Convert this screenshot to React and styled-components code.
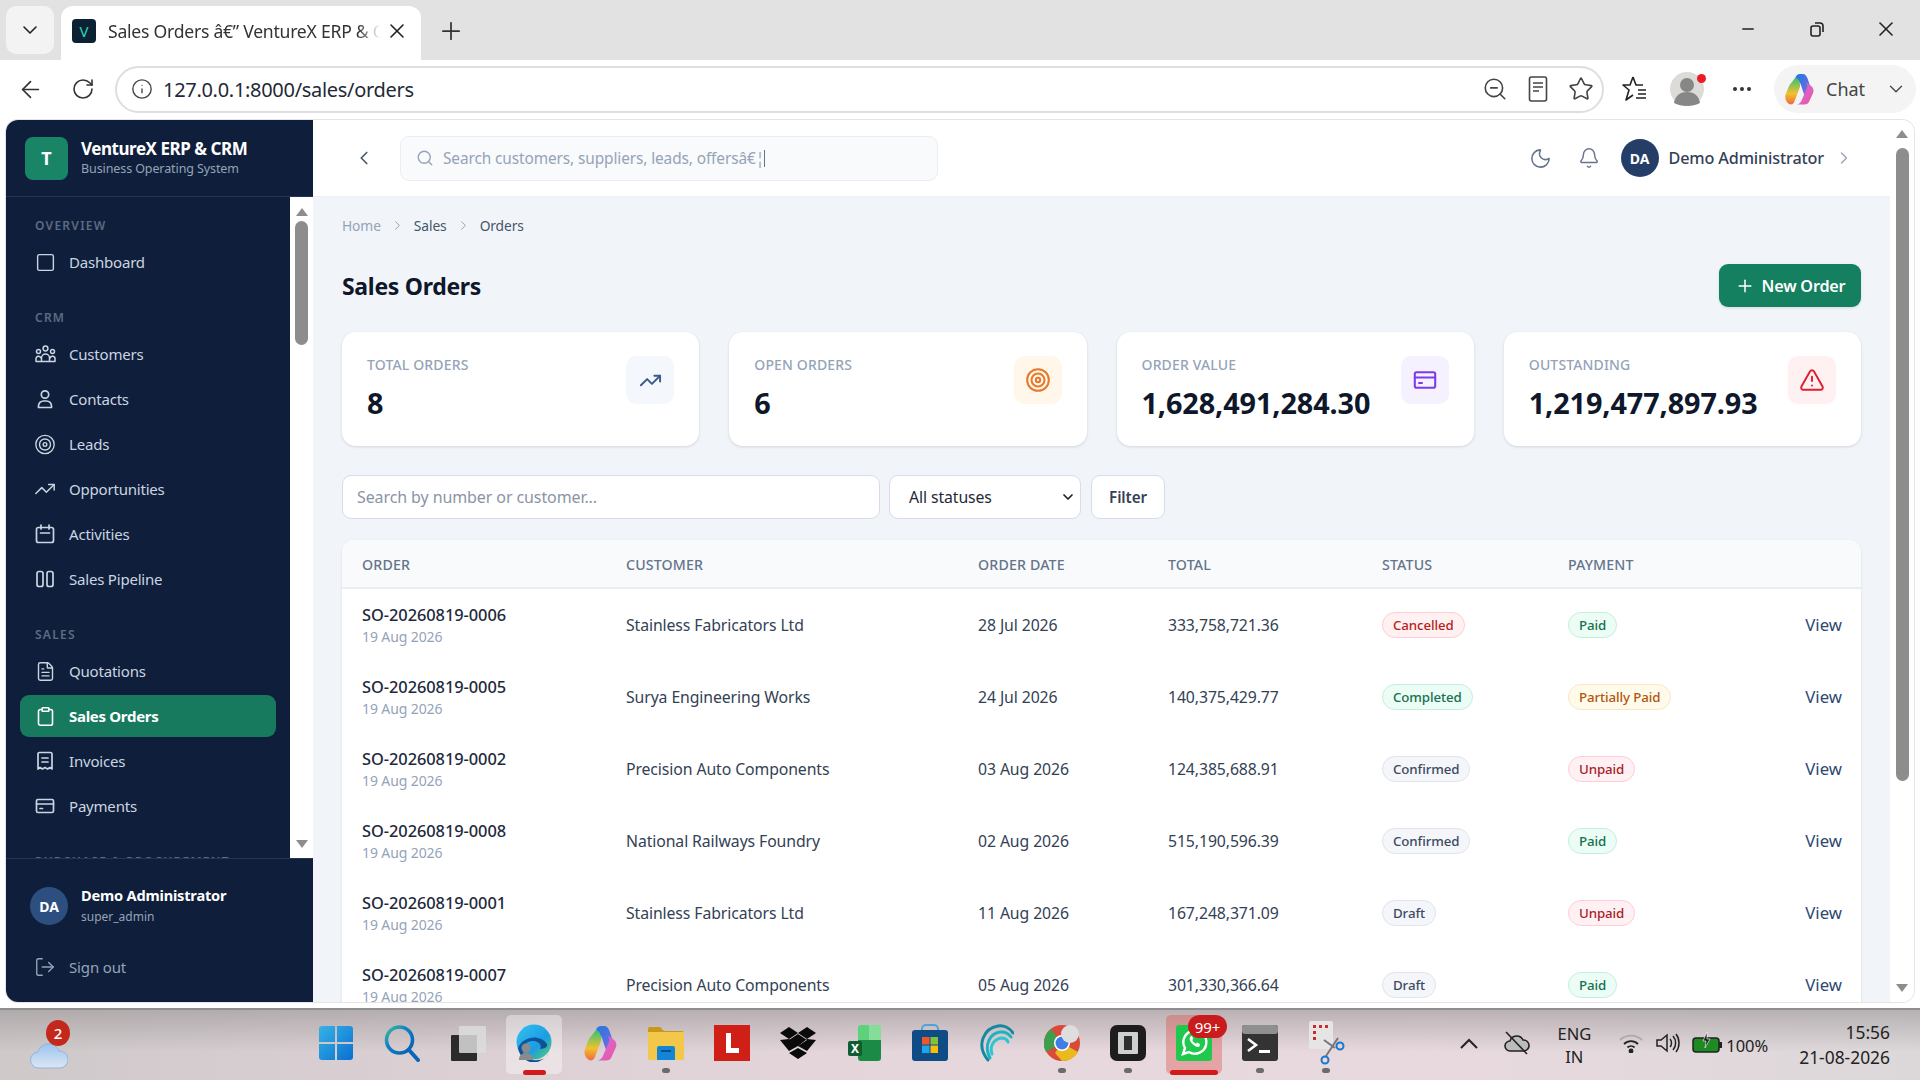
import React from 'react';
import styled, { createGlobalStyle } from 'styled-components';
import { ChevronDown, ChevronLeft, ChevronRight, Plus, X, ArrowLeft, RotateCw, Info, ZoomOut, Star, Minus, Search, Moon, Bell, Square, Target, TrendingUp, FileText, Clipboard, LogOut, TriangleAlert, MoreHorizontal } from 'lucide-react';

const Global = createGlobalStyle`
  * { box-sizing: border-box; }
  html, body { margin: 0; padding: 0; height: 100%; background: #fff; overflow: hidden; }
  body { font-family: "Noto Sans", "Open Sans", Arial, sans-serif; color: #0f172a; }
`;

const Page = styled.div`display:flex;flex-direction:column;height:1080px;width:1920px;overflow:hidden;background:#fff;`;

/* browser chrome */
const TabStrip = styled.div`height:60px;background:#e2e2e2;display:flex;align-items:flex-start;padding:6px 0 0 6px;flex:none;`;
const TabMenu = styled.div`width:48px;height:48px;background:#f3f3f3;border-radius:10px;display:flex;align-items:center;justify-content:center;color:#222;margin-right:7px;`;
const Tab = styled.div`width:360px;height:54px;background:#fff;border-radius:12px 12px 0 0;display:flex;align-items:center;padding:0 0 4px 11px;position:relative;`;
const Favicon = styled.div`width:24px;height:24px;border-radius:4px;background:#0c2132;color:#2dd4bf;font-size:15px;display:flex;align-items:center;justify-content:center;`;
const TabTitle = styled.div`margin-left:12px;width:272px;font-family:"Noto Sans",sans-serif;font-size:17.6px;letter-spacing:-0.25px;color:#333;white-space:nowrap;overflow:hidden;
  -webkit-mask-image:linear-gradient(90deg,#000 92%,transparent);mask-image:linear-gradient(90deg,#000 92%,transparent);`;
const TabClose = styled.div`margin-left:5px;display:flex;color:#222;`;
const NewTab = styled.div`margin:11px 0 0 16px;display:flex;color:#333;`;
const WinControls = styled.div`margin-left:auto;display:flex;align-items:center;height:46px;padding-right:0;color:#222;gap:0;`;
const WinBtn = styled.div`width:69px;display:flex;justify-content:center;`;

const Toolbar = styled.div`height:60px;display:flex;align-items:center;flex:none;padding:0 4px 2px 0;background:#fff;`;
const NavBtn = styled.div`width:46px;margin-left:${p=>p.$ml||0}px;display:flex;justify-content:center;color:#333;`;
const AddressBar = styled.div`margin-left:${p=>p.$ml||0}px;width:1489px;height:47px;border:2px solid #dedede;border-radius:24px;display:flex;align-items:center;padding:0 8px 0 14px;`;
const Url = styled.div`margin-left:10px;font-size:20px;letter-spacing:-0.3px;color:#1f2937;`;
const BarIcons = styled.div`margin-left:auto;display:flex;align-items:center;gap:20px;color:#444;`;
const ToolRight = styled.div`display:flex;align-items:center;color:#333;margin-left:18px;gap:0;`;
const ProfileWrap = styled.div`position:relative;width:34px;height:34px;margin-left:22px;`;
const ProfileDot = styled.div`position:absolute;right:-2px;top:2px;width:9px;height:9px;border-radius:50%;background:#ec1c24;`;
const ChatPill = styled.div`margin-left:9px;width:142px;height:48px;border-radius:24px;background:#f4f4f4;display:flex;align-items:center;padding-left:9px;font-size:18px;color:#444;`;
const ChatLabel = styled.span`margin-left:11px;`;
const ChatChevron = styled.span`margin-left:20px;display:flex;`;

/* window */
const AppWindow = styled.div`margin:0 6px 0 6px;height:882px;flex:none;display:flex;overflow:hidden;border-radius:12px;box-shadow:0 0 0 1px #e4e4e4;background:#fff;`;
const Sidebar = styled.aside`width:307px;flex:none;background:#0f1f3b;display:flex;flex-direction:column;`;
const Brand = styled.div`height:77px;flex:none;display:flex;align-items:center;padding:0 0 0 19px;border-bottom:1px solid #253450;`;
const BrandLogo = styled.div`width:43px;height:43px;border-radius:8px;background:#1a8466;color:#fff;font-size:18px;font-weight:700;display:flex;align-items:center;justify-content:center;`;
const BrandText = styled.div`margin-left:13px;display:flex;flex-direction:column;`;
const BrandName = styled.div`font-size:17px;font-weight:700;letter-spacing:-.45px;color:#fff;line-height:22px;`;
const BrandSub = styled.div`font-size:12.5px;color:#94a3b8;line-height:18px;letter-spacing:-.1px;`;
const NavArea = styled.div`height:661px;flex:none;display:flex;overflow:hidden;`;
const Nav = styled.nav`width:284px;flex:none;padding:20px 14px 0 14px;overflow:hidden;`;
const SectionLabel = styled.div`font-size:12px;font-weight:600;letter-spacing:1.25px;color:#5d6b82;padding-left:15px;height:18px;line-height:18px;margin:${p=>p.$first?'0':'26px'} 0 6px;white-space:nowrap;`;
const NavItem = styled.div`height:42px;margin-bottom:3px;border-radius:9px;display:flex;align-items:center;padding-left:14px;font-size:15px;letter-spacing:${p=>p.$active?'-.3px':'-.2px'};font-weight:${p=>p.$active?700:400};color:${p=>p.$active?'#fff':'#cbd5e1'};background:${p=>p.$active?'#177a5e':'transparent'};`;
const NavIcon = styled.span`width:22px;height:22px;display:flex;align-items:center;justify-content:center;flex:none;margin-right:13px;`;
const Track = styled.div`width:${p=>p.$w}px;flex:none;background:#fff;display:flex;flex-direction:column;align-items:center;`;
const Arrow = styled.div`width:0;height:0;border-left:6px solid transparent;border-right:6px solid transparent;flex:none;`;
const ArrowUp = styled(Arrow)`border-bottom:8px solid #8d8d8d;margin-top:${p=>p.$mt}px;`;
const ArrowDown = styled(Arrow)`border-top:8px solid #8d8d8d;margin-top:auto;margin-bottom:${p=>p.$mb}px;`;
const Thumb = styled.div`width:${p=>p.$w}px;height:${p=>p.$h}px;border-radius:7px;background:#8d8d8d;margin-top:${p=>p.$mt}px;flex:none;`;
const SideFoot = styled.div`flex:1;border-top:1px solid #253450;padding:26px 0 0 24px;`;
const FootUser = styled.div`display:flex;align-items:center;gap:13px;`;
const FootAvatar = styled.div`width:38px;height:38px;border-radius:50%;background:#2d4f80;color:#fff;font-size:14px;font-weight:700;display:flex;align-items:center;justify-content:center;`;
const FootName = styled.div`font-size:14.6px;font-weight:700;letter-spacing:-.2px;color:#fff;line-height:21px;`;
const FootRole = styled.div`font-size:12px;color:#94a3b8;line-height:21px;`;
const SignOut = styled.div`display:flex;align-items:center;margin:29px 0 0 4px;font-size:15px;color:#94a3b8;letter-spacing:-.15px;`;

const MainCol = styled.div`flex:1;min-width:0;display:flex;flex-direction:column;`;
const TopBar = styled.header`height:77px;flex:none;background:#fff;border-bottom:1px solid #eef1f5;display:flex;align-items:center;padding:0 36px 0 40px;color:#64748b;`;
const BackIcon = styled.div`display:flex;color:#475569;`;
const TopSearch = styled.div`margin-left:25px;width:538px;height:45px;border:1px solid #e9eef4;border-radius:9px;background:#f8fafc;display:flex;align-items:center;padding-left:15px;color:#94a3b8;font-size:15.4px;letter-spacing:-.1px;`;
const TopSearchText = styled.span`margin-left:9px;`;
const Caret = styled.span`display:inline-block;width:1px;height:17px;background:#64748b;vertical-align:-3px;`;
const TopRight = styled.div`margin-left:auto;display:flex;align-items:center;`;
const TopIcon = styled.div`display:flex;margin-right:${p=>p.$mr}px;color:#64748b;`;
const TopAvatar = styled.div`width:38px;height:38px;border-radius:50%;background:#243e68;color:#fff;font-size:14px;font-weight:700;display:flex;align-items:center;justify-content:center;`;
const TopName = styled.div`margin:0 10px 0 10px;font-size:16.2px;font-weight:500;letter-spacing:-.15px;color:#334155;`;

const Body = styled.div`flex:1;min-height:0;display:flex;overflow:hidden;background:#f1f5f9;`;
const Content = styled.main`flex:1;min-width:0;padding:17px 29px 0 29px;overflow:hidden;`;
const Crumbs = styled.div`display:flex;align-items:center;height:22px;font-size:13.8px;color:#475569;letter-spacing:-.1px;`;
const CrumbHome = styled.span`color:#94a3b8;`;
const CrumbSep = styled.span`display:flex;color:#94a3b8;margin:0 9px;`;
const HeadRow = styled.div`display:flex;align-items:center;justify-content:space-between;margin-top:28px;height:43px;`;
const Title = styled.h1`margin:0;font-size:23px;font-weight:700;letter-spacing:-.3px;color:#0f172a;`;
const PrimaryBtn = styled.button`height:43px;width:142px;border:0;border-radius:9px;background:#15805f;color:#fff;font:600 16.2px "Noto Sans",sans-serif;letter-spacing:-.2px;display:flex;align-items:center;justify-content:center;gap:7px;box-shadow:0 1px 3px rgba(15,23,42,.12);`;
const Stats = styled.div`display:grid;grid-template-columns:repeat(4,1fr);gap:30px;margin-top:25px;`;
const StatCard = styled.div`height:114px;background:#fff;border-radius:14px;box-shadow:0 1px 3px rgba(15,23,42,.14);padding:24px 25px;display:flex;justify-content:space-between;`;
const StatLabel = styled.div`font-size:14px;font-weight:500;color:#94a3b8;letter-spacing:.15px;line-height:18px;`;
const StatValue = styled.div`font-size:28.8px;font-weight:700;letter-spacing:-.1px;color:#0f172a;margin-top:10px;line-height:38px;white-space:nowrap;`;
const StatIcon = styled.div`width:48px;height:48px;border-radius:10px;background:${p=>p.$bg};color:${p=>p.$fg};display:flex;align-items:center;justify-content:center;flex:none;`;
const Filters = styled.div`display:flex;gap:9px;margin-top:29px;height:44px;`;
const FilterSearch = styled.div`width:538px;border:1px solid #d6dcea;border-radius:9px;background:#fff;padding-left:14px;display:flex;align-items:center;font-size:16px;letter-spacing:-.1px;color:#8a94a6;`;
const FilterSelect = styled.div`width:192px;border:1px solid #d6dcea;border-radius:9px;background:#fff;padding:0 4px 0 19px;display:flex;align-items:center;justify-content:space-between;font-size:15.8px;letter-spacing:-.1px;color:#1f2937;`;
const FilterBtn = styled.div`width:74px;margin-left:1px;border:1px solid #d6dcea;border-radius:9px;background:#fff;display:flex;align-items:center;justify-content:center;font-size:15.2px;font-weight:600;letter-spacing:-.1px;color:#334155;`;
const Table = styled.div`margin-top:21px;background:#fff;border-radius:12px 12px 0 0;box-shadow:0 1px 3px rgba(15,23,42,.1);`;
const cols = '264px 352px 190px 214px 186px 1fr auto';
const HeadGrid = styled.div`display:grid;grid-template-columns:${cols};height:49px;padding:2px 19px 0 20px;align-items:center;background:#f8fafc;border-bottom:2px solid #e9edf3;border-radius:12px 12px 0 0;font-size:14.2px;font-weight:500;letter-spacing:.15px;color:#64748b;`;
const RowGrid = styled.div`display:grid;grid-template-columns:${cols};height:72px;padding:0 19px 0 20px;align-items:center;font-size:15.8px;letter-spacing:-.1px;color:#334155;`;
const OrderNo = styled.div`font-size:16.4px;font-weight:500;letter-spacing:-.05px;color:#1e293b;line-height:22px;margin-top:1px;`;
const OrderDate = styled.div`font-size:14px;color:#94a3b8;line-height:22px;letter-spacing:-.1px;`;
const Pill = styled.span`display:inline-flex;align-items:center;height:26px;padding:0 10px;border-radius:13px;font-size:13.3px;font-weight:500;letter-spacing:-.1px;border:1px solid ${p=>p.$b};background:${p=>p.$bg};color:${p=>p.$fg};`;
const ViewLink = styled.div`text-align:right;font-size:16.8px;font-weight:400;letter-spacing:0;color:#2d4a73;margin-top:-2px;`;

/* taskbar */
const Taskbar = styled.footer`flex:1;position:relative;border-top:2px solid #8e8e8e;margin-top:6px;display:flex;align-items:center;
  background:linear-gradient(180deg,rgba(150,145,146,.55),rgba(226,212,218,0) 60%),linear-gradient(90deg,#cfc9ca 0,#dcd0d4 25%,#e6d7dd 50%,#e8d9de 75%,#dcd8da 100%);`;
const Weather = styled.div`position:absolute;left:30px;top:10px;width:38px;height:48px;`;
const RedBadge = styled.div`position:absolute;left:16px;top:0;width:24px;height:26px;border-radius:50%;background:#c4281c;color:#fff;font-size:15px;font-weight:500;display:flex;align-items:center;justify-content:center;`;
const CloudPos = styled.div`position:absolute;left:0;top:22px;display:flex;`;
const Icons = styled.div`margin-left:303px;display:flex;height:100%;`;
const Slot = styled.div`width:66px;flex:none;position:relative;display:flex;align-items:center;justify-content:center;padding-bottom:4px;`;
const SlotBg = styled.div`position:absolute;left:5px;right:5px;top:5px;bottom:6px;border-radius:5px;background:${p=>p.$c};`;
const SlotIcon = styled.div`position:relative;display:flex;`;
const RunDot = styled.div`position:absolute;bottom:7px;left:50%;margin-left:-4px;width:8px;height:5px;border-radius:3px;background:#6b6b6b;`;
const RunBar = styled.div`position:absolute;bottom:5px;left:50%;margin-left:-${p=>p.$w/2}px;width:${p=>p.$w}px;height:5px;border-radius:3px;background:#d31a1a;`;
const CountBadge = styled.div`position:absolute;right:-15px;top:-10px;width:39px;height:23px;border-radius:12px;background:#c91d1d;color:#fff;font-size:15px;display:flex;align-items:center;justify-content:center;`;
const Tray = styled.div`position:absolute;right:30px;top:0;height:100%;display:flex;align-items:center;color:#222;font-size:17px;`;
const TrayItem = styled.div`display:flex;margin-right:${p=>p.$mr}px;padding-bottom:4px;`;
const Lang = styled.div`text-align:center;line-height:23px;margin-right:${p=>p.$mr}px;font-size:16.5px;`;
const Clock = styled.div`text-align:right;line-height:25px;font-size:17.4px;`;

const sw = 1.7;
const GroupIcon = () => <svg width="21" height="18" viewBox="0 0 21 18" fill="none" stroke="currentColor" strokeWidth="1.500" strokeLinejoin="round"><circle cx="10.500" cy="3.500" r="2.400"/><circle cx="3.500" cy="6.500" r="2"/><circle cx="17.500" cy="6.500" r="2"/><path d="M6.500 16.500v-3.500a4 4 0 0 1 8 0v3.500z"/><path d="M6.500 16.500H1v-2.500a2.500 2.500 0 0 1 5-.5M14.500 16.500H20v-2.500a2.500 2.500 0 0 0-5-.5"/></svg>;
const PersonIcon = () => <svg width="20" height="20" viewBox="0 0 20 20" fill="none" stroke="currentColor" strokeWidth={sw} strokeLinejoin="round"><circle cx="10" cy="5.500" r="3.700"/><path d="M3.500 18.500v-1.500a5 5 0 0 1 5-5h3a5 5 0 0 1 5 5v1.500z"/></svg>;
const PipelineIcon = () => <svg width="20" height="20" viewBox="0 0 20 20" fill="none" stroke="currentColor" strokeWidth={sw}><rect x="2" y="2.500" width="6" height="15" rx="2"/><rect x="12" y="2.500" width="6" height="15" rx="2"/></svg>;
const CalIcon = () => <svg width="20" height="20" viewBox="0 0 20 20" fill="none" stroke="currentColor" strokeWidth={sw} strokeLinecap="round"><rect x="1.500" y="3.500" width="17" height="15" rx="2"/><path d="M6 1v4M14 1v4M5.500 9h9"/></svg>;
const ReceiptIcon = () => <svg width="20" height="20" viewBox="0 0 20 20" fill="none" stroke="currentColor" strokeWidth={sw} strokeLinecap="round" strokeLinejoin="round"><path d="M3 18V3a1.500 1.500 0 0 1 1.500-1.500h11A1.500 1.500 0 0 1 17 3v15l-2-1.500-2.400 1.500-2.600-1.500-2.600 1.500L5 16.500z"/><path d="M7 7h6M7 11h6"/></svg>;
const PayIcon = ({s=20}) => <svg width={s} height={s} viewBox="0 0 20 20" fill="none" stroke="currentColor" strokeWidth={sw} strokeLinecap="round"><rect x="1.500" y="3.500" width="17" height="13" rx="1.500"/><path d="M1.500 8h17M5 12.500h2.500"/></svg>;

const navSections = [
  ['OVERVIEW', [['Dashboard', <Square size={21} strokeWidth={1.6}/>]]],
  ['CRM', [['Customers', <GroupIcon/>], ['Contacts', <PersonIcon/>], ['Leads', <Target size={23} strokeWidth={1.5}/>], ['Opportunities', <TrendingUp size={22} strokeWidth={1.6}/>], ['Activities', <CalIcon/>], ['Sales Pipeline', <PipelineIcon/>]]],
  ['SALES', [['Quotations', <FileText size={21} strokeWidth={1.6}/>], ['Sales Orders', <Clipboard size={21} strokeWidth={1.8}/>, true], ['Invoices', <ReceiptIcon/>], ['Payments', <PayIcon/>]]],
  ['PURCHASE & PROCUREMENT', []],
];

const stats = [
  ['TOTAL ORDERS', '8', '#f4f7fb', '#3b5a8c', <TrendingUp size={23} strokeWidth={2}/>],
  ['OPEN ORDERS', '6', '#fff8ea', '#e8792b', <Target size={26} strokeWidth={1.9}/>],
  ['ORDER VALUE', '1,628,491,284.30', '#f5f1ff', '#7c3aed', <PayIcon s={24}/>],
  ['OUTSTANDING', '1,219,477,897.93', '#fff1f2', '#e11d2f', <TriangleAlert size={26} strokeWidth={1.8}/>],
];

const tones = {
  red: { $b: '#fecdd3', $bg: '#fff1f2', $fg: '#b91c1c' },
  green: { $b: '#c4efdc', $bg: '#ecfdf5', $fg: '#15704f' },
  amber: { $b: '#fde5c0', $bg: '#fffbeb', $fg: '#b4540f' },
  slate: { $b: '#dfe4ee', $bg: '#f4f6fa', $fg: '#3b4a63' },
  pink: { $b: '#fecdd8', $bg: '#fff1f3', $fg: '#a81d2b' },
};

const rows = [
  ['SO-20260819-0006', 'Stainless Fabricators Ltd', '28 Jul 2026', '333,758,721.36', ['Cancelled', 'red'], ['Paid', 'green']],
  ['SO-20260819-0005', 'Surya Engineering Works', '24 Jul 2026', '140,375,429.77', ['Completed', 'green'], ['Partially Paid', 'amber']],
  ['SO-20260819-0002', 'Precision Auto Components', '03 Aug 2026', '124,385,688.91', ['Confirmed', 'slate'], ['Unpaid', 'pink']],
  ['SO-20260819-0008', 'National Railways Foundry', '02 Aug 2026', '515,190,596.39', ['Confirmed', 'slate'], ['Paid', 'green']],
  ['SO-20260819-0001', 'Stainless Fabricators Ltd', '11 Aug 2026', '167,248,371.09', ['Draft', 'slate'], ['Unpaid', 'pink']],
  ['SO-20260819-0007', 'Precision Auto Components', '05 Aug 2026', '301,330,366.64', ['Draft', 'slate'], ['Paid', 'green']],
];

const CopilotLogo = ({ s = 36, id = 'c' }) => (
  <svg width={s} height={s} viewBox="0 0 36 36">
    <defs>
      <linearGradient id={id + '1'} x1="0" y1="0" x2="1" y2="1"><stop offset="0" stopColor="#1f7ae0"/><stop offset=".6" stopColor="#5a6fe0"/><stop offset="1" stopColor="#c65fd0"/></linearGradient>
      <linearGradient id={id + '2'} x1="0" y1="0" x2="0" y2="1"><stop offset="0" stopColor="#2fc27a"/><stop offset=".6" stopColor="#f2c12e"/><stop offset="1" stopColor="#ef6a3a"/></linearGradient>
      <linearGradient id={id + '3'} x1="0" y1="0" x2="1" y2="1"><stop offset="0" stopColor="#c86cf0"/><stop offset="1" stopColor="#f0569a"/></linearGradient>
    </defs>
    <path d="M14 5c1-2.500 2.500-4 5-4h3c3 0 4.500 2 5.500 5L33 22c.5 2-.5 3-2.500 3H24l-4-12c-1-3-3-4-6-4z" fill={`url(#${id}1)`}/>
    <path d="M14 5 7 14 3 24c-1.500 4 .5 9 4 11 2 .8 4 .5 5.500-2L19 16c1-4-1-10-5-11z" fill={`url(#${id}2)`}/>
    <path d="M25 10l6 4c3 2 4 5 3 8l-4 9c-1 3-3 4.500-6 4.500h-8c3-1 4.500-3 5.500-6L27 17c.6-2.500.3-5-2-7z" fill={`url(#${id}3)`}/>
  </svg>
);

const WinLogo = () => <svg width="36" height="36" viewBox="0 0 36 36"><defs><linearGradient id="w" x1="0" y1="0" x2="1" y2="1"><stop offset="0" stopColor="#36b3e6"/><stop offset="1" stopColor="#0a6fd0"/></linearGradient></defs><path fill="url(#w)" d="M1 4a3 3 0 0 1 3-3h13v16H1zM19 1h13a3 3 0 0 1 3 3v13H19zM1 19h16v16H4a3 3 0 0 1-3-3zM19 19h16v13a3 3 0 0 1-3 3H19z"/></svg>;
const SearchLogo = () => <svg width="38" height="38" viewBox="0 0 38 38" fill="none"><defs><linearGradient id="s" x1="0" y1="0" x2="1" y2="1"><stop offset="0" stopColor="#3fbf8f"/><stop offset=".4" stopColor="#0f7fc8"/><stop offset="1" stopColor="#0a5fb0"/></linearGradient></defs><circle cx="16.500" cy="16" r="13" stroke="url(#s)" strokeWidth="3.600"/><path d="M26 26l9 10" stroke="#0a66b8" strokeWidth="4" strokeLinecap="round"/></svg>;
const TaskView = () => <svg width="36" height="36" viewBox="0 0 36 36"><rect x="1" y="10" width="26" height="26" rx="1" fill="#2b2b2b"/><rect x="9" y="1" width="27" height="27" rx="1" fill="#dcdcdc" opacity=".85"/></svg>;
const EdgeLogo = () => <svg width="36" height="38" viewBox="0 0 36 38"><defs><linearGradient id="e1" x1="0" y1="0" x2="1" y2="1"><stop offset="0" stopColor="#35c1f1"/><stop offset=".6" stopColor="#1b9de2"/><stop offset="1" stopColor="#5ed35e"/></linearGradient><linearGradient id="e2" x1="0" y1="0" x2="1" y2="1"><stop offset="0" stopColor="#0c59a4"/><stop offset="1" stopColor="#114a8b"/></linearGradient></defs><circle cx="18" cy="18" r="17.500" fill="url(#e1)"/><path d="M2 24c5-12 22-14 29-4 1 3-2 5-7 5 3-6-5-10-12-7-4 2-6 7-4 13 3 4 9 6 14 5 5 0 9-3 12-8-4 7-13 12-20 10C8 36 3 31 2 24z" fill="url(#e2)"/><circle cx="10" cy="24" r="4.500" fill="#8a8a8a"/><path d="M3 36c0-5 3-7 7-7s7 2 7 7z" fill="#8a8a8a"/></svg>;
const FolderLogo = () => <svg width="36" height="34" viewBox="0 0 36 34"><path d="M0 3a2 2 0 0 1 2-2h10l4 4h18a2 2 0 0 1 2 2v2H0z" fill="#c69a16"/><path d="M0 6h36v26a2 2 0 0 1-2 2H2a2 2 0 0 1-2-2z" fill="#f3c84a"/><path d="M9 22a2 2 0 0 1 2-2h14a2 2 0 0 1 2 2v12H9z" fill="#1385d6"/><rect x="13" y="24" width="10" height="2" fill="#0a4f8c"/></svg>;
const LLogo = () => <svg width="36" height="36" viewBox="0 0 36 36"><rect width="36" height="36" fill="#d01f17"/><path d="M12 8h5v15h8v5H12z" fill="#fff"/></svg>;
const DropboxLogo = () => <svg width="36" height="32" viewBox="0 0 36 32"><path d="M9 0 18 6 9 12 0 6zM27 0l9 6-9 6-9-6zM9 13l9-6 9 6-9 6-9-6zM0 13l9-1 9 7-9 5zM36 13l-9-1-9 7 9 5zM18 21l9 5-9 6-9-6z" fill="#0a0a0a"/></svg>;
const ExcelLogo = () => <svg width="33" height="36" viewBox="0 0 33 36"><path d="M10 3a3 3 0 0 1 3-3h17a3 3 0 0 1 3 3v12H10z" fill="#5fd07c"/><path d="M21 0h9a3 3 0 0 1 3 3v12H21z" fill="#86dd9a"/><path d="M10 15h23v18a3 3 0 0 1-3 3H13a3 3 0 0 1-3-3z" fill="#1a8a46"/><rect y="16" width="14" height="15" rx="2" fill="#0e5c2f"/><text x="7" y="28" fontSize="12" fontWeight="700" fill="#fff" textAnchor="middle" fontFamily="Noto Sans">X</text></svg>;
const StoreLogo = () => <svg width="36" height="38" viewBox="0 0 36 38"><path d="M10 8V5a4 4 0 0 1 4-4h8a4 4 0 0 1 4 4v3" fill="none" stroke="#4fa3d8" strokeWidth="2"/><rect y="6" width="36" height="31" rx="3" fill="#0f4c86"/><rect x="10" y="13" width="7.500" height="7.500" fill="#f0562a"/><rect x="18.500" y="13" width="7.500" height="7.500" fill="#80c03a"/><rect x="10" y="21.500" width="7.500" height="7.500" fill="#1fa5ea"/><rect x="18.500" y="21.500" width="7.500" height="7.500" fill="#fbbc09"/></svg>;
const SwirlLogo = () => <svg width="36" height="38" viewBox="0 0 36 38" fill="none" strokeLinecap="round"><path d="M10 36C-3 20 7 4 20 2c6-1 12 2 15 7" stroke="#14899e" strokeWidth="3"/><path d="M12 34C5 20 13 9 22 8c5-.5 9 2 11 5" stroke="#1cb3c0" strokeWidth="3"/><path d="M14 30c-3-9 3-15 9-16 4 0 6 1 7 4" stroke="#2dc5cf" strokeWidth="3"/></svg>;
const ChromeLogo = () => <svg width="36" height="38" viewBox="0 0 36 38"><circle cx="18" cy="19" r="18" fill="#d94a38"/><path d="M18 19 2 28A18 18 0 0 1 7 5z" fill="#3f9d4e"/><path d="M18 19 34 28a18 18 0 0 1-16 9l-7-8z" fill="#e9b91e"/><circle cx="18" cy="19" r="8" fill="#fff"/><circle cx="18" cy="19" r="6.500" fill="#3f7de8"/><circle cx="26" cy="10" r="9" fill="#dedede"/></svg>;
const SwitchLogo = () => <svg width="36" height="36" viewBox="0 0 36 36"><rect width="36" height="36" rx="7" fill="#1d1d1d"/><rect x="8" y="7" width="20" height="22" rx="1" fill="#cfcfcf"/><rect x="14" y="11" width="8" height="14" fill="#303030"/></svg>;
const WhatsappLogo = () => <svg width="36" height="36" viewBox="0 0 36 36"><rect width="36" height="36" rx="3" fill="#1fc94d"/><path d="M7 29l2-6a11.500 11.500 0 1 1 4 4z" fill="none" stroke="#fff" strokeWidth="2.400"/><path d="M14 12c-1 2 0 5 3 7.500s5 3 6.500 2l.5-2.500-3-1.500-1 1.200c-1.500-.7-3-2-3.700-3.700l1-1.200-1.400-3z" fill="#fff"/></svg>;
const TerminalLogo = () => <svg width="36" height="36" viewBox="0 0 36 36"><rect width="36" height="36" rx="3" fill="#333"/><rect width="36" height="9" rx="3" fill="#8f8f8f"/><path d="M6 14l8 6-8 6" stroke="#fff" strokeWidth="2.600" fill="none"/><rect x="17" y="25" width="11" height="3" fill="#fff"/></svg>;
const SnipLogo = () => <svg width="37" height="46" viewBox="0 0 37 46" fill="none"><rect x="1" y="1" width="24" height="28" rx="2" fill="#e5e5e5"/><path d="M5 5h3v3H5zM11 5h3v3h-3zM17 5h3v3h-3zM5 11h3v3H5zM5 17h3v3H5z" fill="#c92a2a"/><path d="M16 20l11 8M30 18 18 36" stroke="#777" strokeWidth="2"/><circle cx="32" cy="26" r="3.500" stroke="#1878d0" strokeWidth="2"/><circle cx="17" cy="40" r="3.500" stroke="#1878d0" strokeWidth="2"/></svg>;

export default function App() {
  return (
    <Page>
      <Global />
      <TabStrip>
        <TabMenu><ChevronDown size={24} strokeWidth={1.6} /></TabMenu>
        <Tab>
          <Favicon>V</Favicon>
          <TabTitle>{'Sales Orders â€\u201D VentureX ERP & CRM'}</TabTitle>
          <TabClose><X size={24} strokeWidth={1.6} /></TabClose>
        </Tab>
        <NewTab><Plus size={28} strokeWidth={1.5} /></NewTab>
        <WinControls>
          <WinBtn><Minus size={18} strokeWidth={1.8} /></WinBtn>
          <WinBtn><svg width="18" height="18" viewBox="0 0 18 18" fill="none" stroke="#222" strokeWidth="1.600"><rect x="3" y="6" width="9" height="10" rx="2"/><path d="M7 3h5a3 3 0 0 1 3 3v6"/></svg></WinBtn>
          <WinBtn><X size={24} strokeWidth={1.6} /></WinBtn>
        </WinControls>
      </TabStrip>
      <Toolbar>
        <NavBtn $ml={7}><ArrowLeft size={27} strokeWidth={1.5} /></NavBtn>
        <NavBtn $ml={7}><RotateCw size={24} strokeWidth={1.6} /></NavBtn>
        <AddressBar $ml={9}>
          <Info size={22} strokeWidth={1.5} color="#444" />
          <Url>127.0.0.1:8000/sales/orders</Url>
          <BarIcons>
            <ZoomOut size={26} strokeWidth={1.5} />
            <svg width="20" height="26" viewBox="0 0 20 26" fill="none" stroke="#444" strokeWidth="1.600"><rect x="1.500" y="1" width="17" height="24" rx="2"/><path d="M5 7h10M5 11h10M5 15h6"/></svg>
            <Star size={26} strokeWidth={1.5} />
          </BarIcons>
        </AddressBar>
        <ToolRight>
          <svg width="26" height="28" viewBox="0 0 26 28" fill="none" stroke="#222" strokeWidth="1.600" strokeLinejoin="round"><path d="M11 2l3 8h7M11 2 8 10H1l6 5-3 10 7-5"/><path d="M16 15h8M16 19h8M14 23h10"/></svg>
          <ProfileWrap>
            <svg width="34" height="34" viewBox="0 0 34 34"><circle cx="17" cy="17" r="17" fill="#dcdbd8"/><circle cx="17" cy="13" r="7" fill="#878787"/><path d="M4 31c1-8 7-11 13-11s12 3 13 11c-7 4-19 4-26 0z" fill="#878787"/></svg>
            <ProfileDot />
          </ProfileWrap>
          <NavBtn $ml={15}><MoreHorizontal size={24} strokeWidth={2} /></NavBtn>
          <ChatPill>
            <CopilotLogo s={32} id="ct" />
            <ChatLabel>Chat</ChatLabel>
            <ChatChevron><ChevronDown size={22} strokeWidth={1.4} /></ChatChevron>
          </ChatPill>
        </ToolRight>
      </Toolbar>

      <AppWindow>
        <Sidebar>
          <Brand>
            <BrandLogo>T</BrandLogo>
            <BrandText>
              <BrandName>VentureX ERP &amp; CRM</BrandName>
              <BrandSub>Business Operating System</BrandSub>
            </BrandText>
          </Brand>
          <NavArea>
            <Nav>
              {navSections.map(([label, items], i) => (
                <React.Fragment key={label}>
                  <SectionLabel $first={i === 0}>{label}</SectionLabel>
                  {items.map(([name, icon, active]) => (
                    <NavItem key={name} $active={active}><NavIcon>{icon}</NavIcon>{name}</NavItem>
                  ))}
                </React.Fragment>
              ))}
            </Nav>
            <Track $w={23}>
              <ArrowUp $mt={11} />
              <Thumb $w={13} $h={124} $mt={5} />
              <ArrowDown $mb={10} />
            </Track>
          </NavArea>
          <SideFoot>
            <FootUser>
              <FootAvatar>DA</FootAvatar>
              <div>
                <FootName>Demo Administrator</FootName>
                <FootRole>super_admin</FootRole>
              </div>
            </FootUser>
            <SignOut><NavIcon><LogOut size={22} strokeWidth={1.5} /></NavIcon>Sign out</SignOut>
          </SideFoot>
        </Sidebar>
        <MainCol>
          <TopBar>
            <BackIcon><ChevronLeft size={22} strokeWidth={1.8} /></BackIcon>
            <TopSearch>
              <Search size={18} strokeWidth={1.8} color="#94a3b8" />
              <TopSearchText>{'Search customers, suppliers, leads, offersâ€\u00A6'}<Caret /></TopSearchText>
            </TopSearch>
            <TopRight>
              <TopIcon $mr={26}><Moon size={23} strokeWidth={1.6} /></TopIcon>
              <TopIcon $mr={21}><Bell size={22} strokeWidth={1.6} /></TopIcon>
              <TopAvatar>DA</TopAvatar>
              <TopName>Demo Administrator</TopName>
              <ChevronRight size={20} strokeWidth={1.6} color="#94a3b8" />
            </TopRight>
          </TopBar>
          <Body>
            <Content>
              <Crumbs>
                <CrumbHome>Home</CrumbHome>
                <CrumbSep><ChevronRight size={15} strokeWidth={1.6} /></CrumbSep>
                Sales
                <CrumbSep><ChevronRight size={15} strokeWidth={1.6} /></CrumbSep>
                Orders
              </Crumbs>
              <HeadRow>
                <Title>Sales Orders</Title>
                <PrimaryBtn><Plus size={20} strokeWidth={1.8} />New Order</PrimaryBtn>
              </HeadRow>
              <Stats>
                {stats.map(([l, v, bg, fg, ic]) => (
                  <StatCard key={l}>
                    <div><StatLabel>{l}</StatLabel><StatValue>{v}</StatValue></div>
                    <StatIcon $bg={bg} $fg={fg}>{ic}</StatIcon>
                  </StatCard>
                ))}
              </Stats>
              <Filters>
                <FilterSearch>Search by number or customer...</FilterSearch>
                <FilterSelect>All statuses<ChevronDown size={16} strokeWidth={2.6} color="#222" /></FilterSelect>
                <FilterBtn>Filter</FilterBtn>
              </Filters>
              <Table>
                <HeadGrid><div>ORDER</div><div>CUSTOMER</div><div>ORDER DATE</div><div>TOTAL</div><div>STATUS</div><div>PAYMENT</div><div /></HeadGrid>
                {rows.map(([no, cust, date, total, st, pay]) => (
                  <RowGrid key={no}>
                    <div><OrderNo>{no}</OrderNo><OrderDate>19 Aug 2026</OrderDate></div>
                    <div>{cust}</div>
                    <div>{date}</div>
                    <div>{total}</div>
                    <div><Pill {...tones[st[1]]}>{st[0]}</Pill></div>
                    <div><Pill {...tones[pay[1]]}>{pay[0]}</Pill></div>
                    <ViewLink>View</ViewLink>
                  </RowGrid>
                ))}
              </Table>
            </Content>
          </Body>
        </MainCol>
        <Track $w={24}>
          <ArrowUp $mt={10} />
          <Thumb $w={13} $h={633} $mt={10} />
          <ArrowDown $mb={10} />
        </Track>
      </AppWindow>

      <Taskbar>
        <Weather>
          <CloudPos><svg width="38" height="28" viewBox="0 0 38 28"><defs><linearGradient id="cl" x1="0" y1="0" x2="0" y2="1"><stop offset="0" stopColor="#9cc4ee"/><stop offset="1" stopColor="#dbe6f4"/></linearGradient></defs><path d="M9 26a8 8 0 0 1-1-16 11 11 0 0 1 21-1 8.500 8.500 0 0 1 1 17z" fill="url(#cl)" stroke="#8fb5e0"/></svg></CloudPos>
          <RedBadge>2</RedBadge>
        </Weather>
        <Icons>
          <Slot><SlotIcon><WinLogo /></SlotIcon></Slot>
          <Slot><SlotIcon><SearchLogo /></SlotIcon></Slot>
          <Slot><SlotIcon><TaskView /></SlotIcon></Slot>
          <Slot><SlotBg $c="rgba(255,255,255,.38)" /><SlotIcon><EdgeLogo /></SlotIcon><RunBar $w={23} /></Slot>
          <Slot><SlotIcon><CopilotLogo id="tb" /></SlotIcon></Slot>
          <Slot><SlotIcon><FolderLogo /></SlotIcon><RunDot /></Slot>
          <Slot><SlotIcon><LLogo /></SlotIcon></Slot>
          <Slot><SlotIcon><DropboxLogo /></SlotIcon></Slot>
          <Slot><SlotIcon><ExcelLogo /></SlotIcon></Slot>
          <Slot><SlotIcon><StoreLogo /></SlotIcon></Slot>
          <Slot><SlotIcon><SwirlLogo /></SlotIcon></Slot>
          <Slot><SlotIcon><ChromeLogo /></SlotIcon><RunDot /></Slot>
          <Slot><SlotIcon><SwitchLogo /></SlotIcon><RunDot /></Slot>
          <Slot><SlotBg $c="rgba(220,70,60,.35)" /><SlotIcon><WhatsappLogo /><CountBadge>99+</CountBadge></SlotIcon><RunBar $w={48} /></Slot>
          <Slot><SlotIcon><TerminalLogo /></SlotIcon><RunDot /></Slot>
          <Slot><SlotIcon><SnipLogo /></SlotIcon><RunDot /></Slot>
        </Icons>
        <Tray>
          <TrayItem $mr={24}><svg width="20" height="12" viewBox="0 0 20 12" fill="none" stroke="#222" strokeWidth="2"><path d="M2 11l8-8 8 8"/></svg></TrayItem>
          <TrayItem $mr={26}><svg width="28" height="24" viewBox="0 0 28 24" fill="none" stroke="#222" strokeWidth="1.600"><path d="M7 20a5 5 0 0 1 0-10 7 7 0 0 1 13-1 5.500 5.500 0 0 1 1 11z" fill="#bcbcbc"/><path d="M3 1l21 22"/></svg></TrayItem>
          <Lang $mr={28}>ENG<br />IN</Lang>
          <TrayItem $mr={13}><svg width="24" height="20" viewBox="0 0 24 20" fill="none" stroke="#222" strokeWidth="1.800"><path d="M1 7a16 16 0 0 1 22 0" stroke="#aaa"/><path d="M5 11a10 10 0 0 1 14 0M8.500 14.500a5 5 0 0 1 7 0"/><circle cx="12" cy="18" r="1.500" fill="#222"/></svg></TrayItem>
          <TrayItem $mr={11}><svg width="25" height="22" viewBox="0 0 25 22" fill="none" stroke="#222" strokeWidth="1.500"><path d="M1 8h4l6-5v16l-6-5H1z"/><path d="M14 7c2 2 2 6 0 8M17 4c3.500 4 3.500 10 0 14M20 2c4 5 4 13 0 18"/></svg></TrayItem>
          <TrayItem $mr={3}><svg width="31" height="24" viewBox="0 0 31 24"><rect x="1" y="7" width="26" height="14" rx="3" fill="#1d8a22" stroke="#222" strokeWidth="1.500"/><rect x="27" y="11" width="3" height="6" fill="#222"/><path d="M15 1l-4 9h3l-1 7 5-9h-3z" fill="#222" stroke="#fff" strokeWidth=".6"/></svg></TrayItem>
          <Lang $mr={31}>100%</Lang>
          <Clock>15:56<br />21-08-2026</Clock>
        </Tray>
      </Taskbar>
    </Page>
  );
}
